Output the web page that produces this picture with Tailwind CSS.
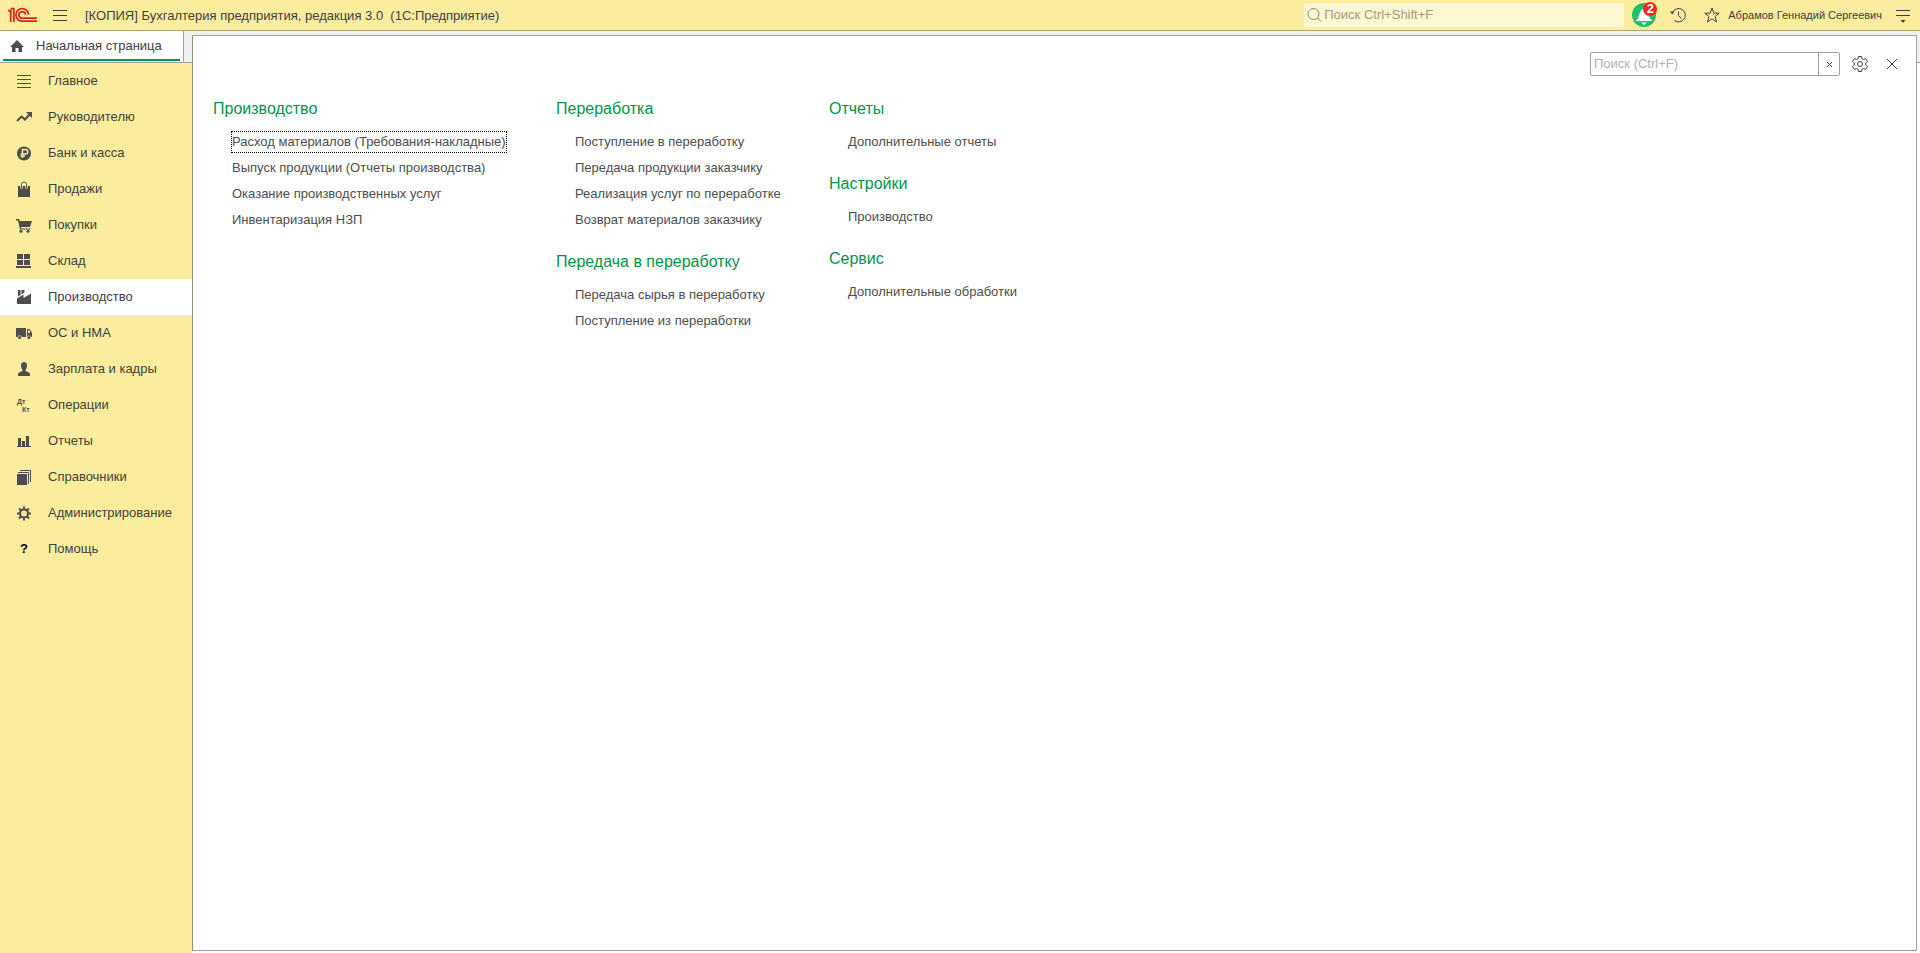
<!DOCTYPE html>
<html lang="ru">
<head>
    <meta charset="UTF-8">
    <meta name="viewport" content="width=device-width, initial-scale=1.0">
    <title>Бухгалтерия предприятия, редакция 3.0</title>
    <script src="https://cdn.jsdelivr.net/npm/@tailwindcss/browser@4"></script>
</head>
<body class="bg-white font-['Liberation_Sans',Arial,sans-serif] text-[13px] leading-5 text-[#404040]">
    <div class="flex flex-col min-h-screen">

        <!-- Top bar -->
        <header class="flex items-center h-[31px] bg-[#fbed9e] border-b border-[#a9a474]">
            <svg class="ml-2 w-[30px] h-4 shrink-0" viewBox="0 0 30 16" fill="none" stroke="#d9261c" stroke-width="1.8" aria-label="1С">
                <path d="M0 3.700H2.700V15M2.500 1.700H5.800V15"/>
                <path d="M20.500 7.500A6.300 6.300 0 1 0 14.500 14.200H29"/>
                <path d="M17.500 7.500A3.300 3.300 0 1 0 14.500 11.200H29"/>
            </svg>
            <button class="ml-[15px] w-[14px] h-4" aria-label="Меню">
                <svg class="w-[14px] h-4" viewBox="0 0 14 16" stroke="#404040"><path d="M0 3.500H14M0 8.500H14M0 13.500H14"/></svg>
            </button>
            <h1 class="ml-[18px] pt-[2px] flex-1 whitespace-pre">[КОПИЯ] Бухгалтерия предприятия, редакция 3.0  (1С:Предприятие)</h1>
            <label class="flex items-center w-80 h-6 pl-[3px] gap-px bg-[#fdf7d3] rounded-xs">
                <svg class="w-4 h-4 shrink-0" viewBox="0 0 16 16" fill="none" stroke="#8b8769"><circle cx="6.500" cy="7" r="5.500"/><path d="M10.500 11L14.500 15"/></svg>
                <input class="flex-1 min-w-0 outline-none placeholder:text-[#a09c80]" type="text" aria-label="Глобальный поиск" placeholder="Поиск Ctrl+Shift+F">
            </label>
            <button class="relative ml-2 w-6 h-6" aria-label="Уведомления">
                <svg class="w-6 h-6" viewBox="0 0 24 24"><circle cx="12" cy="12" r="12" fill="#1fbf6b"/><path d="M3.500 18C7 15.500 6.500 13 8 9.500C9 7 10 6 12 6C14 6 15 7 16 9.500C17.500 13 17 15.500 20.500 18Z" fill="#fff"/><path d="M9 19.500H15L12 22Z" fill="#fff"/></svg>
                <span class="absolute -top-px -right-px size-[14px] rounded-full bg-[#ff2020] text-white text-[13px] leading-[14px] font-bold">2</span>
            </button>
            <button class="ml-[14px] w-4 h-4" aria-label="История">
                <svg class="w-4 h-4" viewBox="0 0 16 16" fill="none" stroke="#404040"><path d="M2.500 5.500A6.700 6.700 0 1 1 4.500 13.500M8.500 4.500V8.500L11.500 11.500"/><path d="M0 4.500H4.500L2.300 7.500Z" fill="#404040" stroke="none"/></svg>
            </button>
            <button class="ml-[18px] w-4 h-4" aria-label="Избранное">
                <svg class="w-4 h-4" viewBox="0 0 16 16" fill="none" stroke="#404040"><path d="M8 1L9.900 6.200H15.200L11 9.500L12.500 15L8 11.800L3.500 15L5 9.500L0.800 6.200H6.100Z"/></svg>
            </button>
            <a class="ml-2 text-[11px]" href="#">Абрамов Геннадий Сергеевич</a>
            <button class="ml-[14px] mr-[10px] w-[14px] h-4" aria-label="Сервис и настройки">
                <svg class="w-[14px] h-4" viewBox="0 0 14 16"><path d="M0 3.500H14M0 8.500H14" stroke="#404040"/><path d="M4.500 13H9.500L7 16Z" fill="#404040"/></svg>
            </button>
        </header>

        <div class="flex flex-1 bg-[linear-gradient(#f0f0f0_31px,#a0a0a0_31px,#a0a0a0_32px,#fff_32px)]">
            <div class="flex flex-col w-48 shrink-0">
                <!-- Open windows -->
                <div class="h-8 border-b border-[#a0a0a0]">
                    <a class="flex items-center w-[184px] h-[31px] px-[3px] bg-white border-r border-[#a0a0a0]" href="#">
                        <span class="flex items-center flex-1 h-[29px] pl-[7px] gap-3 border-b-2 border-[#009646]">
                            <svg class="w-[14px] h-3" viewBox="0 0 14 12" fill="#4d4d4d"><path d="M7 0L14 7H12V12H8.500V8H5.500V12H2V7H0Z"/></svg>
                            Начальная страница
                        </span>
                    </a>
                </div>

                <!-- Sections -->
                <nav class="flex-1 bg-[#fbed9e]">
                    <a class="flex items-center h-9 pl-4 gap-4" href="#">
                        <svg class="w-4 h-4" viewBox="0 0 16 16" stroke="#4d4d4d"><path d="M1 2.500H15M1 6.500H15M1 10.500H15M1 14.500H15"/></svg>
                        Главное
                    </a>
                    <a class="flex items-center h-9 pl-4 gap-4" href="#">
                        <svg class="w-4 h-4" viewBox="0 0 16 16" fill="none"><path d="M1 12L5.500 7.500L9 10.500L14 5" stroke="#4d4d4d" stroke-width="2"/><path d="M10 3H16V9Z" fill="#4d4d4d"/></svg>
                        Руководителю
                    </a>
                    <a class="flex items-center h-9 pl-4 gap-4" href="#">
                        <svg class="w-4 h-4" viewBox="0 0 16 16" fill="none"><circle cx="8" cy="8.500" r="7" fill="#4d4d4d"/><path d="M6.500 13V4.500H9.500A2.200 2.200 0 0 1 9.500 9H4.500M4.500 11H9" stroke="#fbed9e" stroke-width="1.500"/></svg>
                        Банк и касса
                    </a>
                    <a class="flex items-center h-9 pl-4 gap-4" href="#">
                        <svg class="w-4 h-4" viewBox="0 0 16 16" fill="none"><path d="M2 5H14V16H2Z" fill="#4d4d4d"/><path d="M5.500 7.500V3.500A2.500 2.500 0 0 1 10.500 3.500V7.500" stroke="#fbed9e" stroke-width="2.500"/><path d="M5.500 7V3.500A2.500 2.500 0 0 1 10.500 3.500V7" stroke="#4d4d4d"/></svg>
                        Продажи
                    </a>
                    <a class="flex items-center h-9 pl-4 gap-4" href="#">
                        <svg class="w-4 h-4" viewBox="0 0 16 16" fill="#4d4d4d"><path d="M0 2H3.200L3.700 4H16L14 10H5L5.300 11.500H14V12.500H4L2 3.500H0Z"/><circle cx="5" cy="14.300" r="1.500"/><circle cx="12" cy="14.300" r="1.500"/></svg>
                        Покупки
                    </a>
                    <a class="flex items-center h-9 pl-4 gap-4" href="#">
                        <svg class="w-4 h-4" viewBox="0 0 16 16" fill="#4d4d4d"><path d="M1 1H7V6H1ZM8 1H14V6H8ZM1 7H7V12H1ZM8 7H14V12H8ZM0 13H15V15H0Z"/></svg>
                        Склад
                    </a>
                    <a class="flex items-center h-9 pl-4 gap-4 bg-white" href="#" aria-current="page">
                        <svg class="w-4 h-4" viewBox="0 0 16 16" fill="#4d4d4d"><path d="M1 15V9.500L7.500 5.500V9L15 4.500V15ZM2 1H4.500V6L2 7.500ZM5.500 1H8.500V3.500L5.500 5.500Z"/></svg>
                        Производство
                    </a>
                    <a class="flex items-center h-9 pl-4 gap-4" href="#">
                        <svg class="w-4 h-4" viewBox="0 0 16 16" fill="#4d4d4d"><path d="M0 3H10V12H6A2.500 2.500 0 0 0 1.500 12H0ZM11 4H13.500L16 7.500V12H15A2.300 2.300 0 0 0 11 11.500ZM12 5V8H14.500L13 5Z" fill-rule="evenodd"/><circle cx="3.700" cy="12.500" r="1.500"/><circle cx="12.800" cy="12.500" r="1.500"/></svg>
                        ОС и НМА
                    </a>
                    <a class="flex items-center h-9 pl-4 gap-4" href="#">
                        <svg class="w-4 h-4" viewBox="0 0 16 16" fill="#4d4d4d"><path d="M8 1C10 1 11 2.500 11 4.500C11 6.500 10 8.500 9.500 9V10L13 11.500C14 12 14 13 14 15H2C2 13 2 12 3 11.500L6.500 10V9C6 8.500 5 6.500 5 4.500C5 2.500 6 1 8 1Z"/></svg>
                        Зарплата и кадры
                    </a>
                    <a class="flex items-center h-9 pl-4 gap-4" href="#">
                        <svg class="w-4 h-4 overflow-visible" viewBox="0 0 16 16" fill="#4d4d4d" font-size="7" font-weight="bold"><text x="1" y="7">Дт</text><text x="6" y="15">Кт</text></svg>
                        Операции
                    </a>
                    <a class="flex items-center h-9 pl-4 gap-4" href="#">
                        <svg class="w-4 h-4" viewBox="0 0 16 16" fill="#4d4d4d"><path d="M2 5H5V13H2ZM6 8H9V13H6ZM10 3H13V13H10ZM1 13H15V14H1Z"/></svg>
                        Отчеты
                    </a>
                    <a class="flex items-center h-9 pl-4 gap-4" href="#">
                        <svg class="w-4 h-4" viewBox="0 0 16 16" fill="none"><path d="M1 5H11V16H1Z" fill="#4d4d4d"/><path d="M2 3.500H12.500V15M4 1.500H14.500V13" stroke="#4d4d4d"/></svg>
                        Справочники
                    </a>
                    <a class="flex items-center h-9 pl-4 gap-4" href="#">
                        <svg class="w-4 h-4" viewBox="0 0 16 16" fill="none" stroke="#4d4d4d" stroke-width="2"><circle cx="8" cy="8.500" r="4"/><path d="M8 1.500V4M8 13V15.500M1 8.500H3.500M12.500 8.500H15M3 3.500L5 5.500M11 11.500L13 13.500M13 3.500L11 5.500M5 11.500L3 13.500"/></svg>
                        Администрирование
                    </a>
                    <a class="flex items-center h-9 pl-4 gap-4" href="#">
                        <span class="w-4 text-center font-bold text-black" aria-hidden="true">?</span>
                        Помощь
                    </a>
                </nav>
            </div>

            <!-- Section panel -->
            <main class="flex-1 mt-1 mr-[3px] mb-[2px] bg-white border border-[#a0a0a0] border-l-[#949069]">
                <div class="flex items-center justify-end h-6 mt-4 pr-[19px]">
                    <div class="flex w-[250px] h-6 border border-[#a0a0a0] rounded-xs">
                        <input class="flex-1 min-w-0 pl-[3px] outline-none placeholder:text-[#b0b0b0]" type="text" aria-label="Поиск" placeholder="Поиск (Ctrl+F)">
                        <button class="w-[21px] border-l border-[#a0a0a0] flex items-center justify-center" aria-label="Очистить">
                            <svg class="w-[5px] h-[5px]" viewBox="0 0 5 5" stroke="#404040"><path d="M0 0L5 5M5 0L0 5"/></svg>
                        </button>
                    </div>
                    <button class="ml-3 w-4 h-4" aria-label="Настройки">
                        <svg class="w-4 h-4" viewBox="0 0 16 16" fill="none" stroke="#404040"><path d="M6.500 0.500H9.500L10 2.700L11.500 3.500L13.500 2.500L15.500 5.500L13.800 7V9L15.500 10.500L13.500 13.500L11.500 12.500L10 13.300L9.500 15.500H6.500L6 13.300L4.500 12.500L2.500 13.500L0.500 10.500L2.200 9V7L0.500 5.500L2.500 2.500L4.500 3.500L6 2.700Z"/><circle cx="8" cy="8" r="2.500"/></svg>
                    </button>
                    <button class="ml-[19px] w-[10px] h-[10px]" aria-label="Закрыть">
                        <svg class="w-[10px] h-[10px]" viewBox="0 0 10 10" stroke="#404040"><path d="M0 0L10 10M10 0L0 10"/></svg>
                    </button>
                </div>

                <div class="grid grid-cols-[343px_273px_auto] mt-[23px] pl-5 text-[#4d4d4d]">
                    <div class="flex flex-col gap-[19px]">
                        <section>
                            <h2 class="mb-[10px] text-base leading-5 text-[#009646]">Производство</h2>
                            <ul class="pl-[19px] leading-[26px]">
                                <li class="h-[26px] flex items-center"><a class="leading-5 outline-1 outline-dotted outline-black" href="#">Расход материалов (Требования-накладные)</a></li>
                                <li><a href="#">Выпуск продукции (Отчеты производства)</a></li>
                                <li><a href="#">Оказание производственных услуг</a></li>
                                <li><a href="#">Инвентаризация НЗП</a></li>
                            </ul>
                        </section>
                    </div>
                    <div class="flex flex-col gap-[19px]">
                        <section>
                            <h2 class="mb-[10px] text-base leading-5 text-[#009646]">Переработка</h2>
                            <ul class="pl-[19px] leading-[26px]">
                                <li><a href="#">Поступление в переработку</a></li>
                                <li><a href="#">Передача продукции заказчику</a></li>
                                <li><a href="#">Реализация услуг по переработке</a></li>
                                <li><a href="#">Возврат материалов заказчику</a></li>
                            </ul>
                        </section>
                        <section>
                            <h2 class="mb-[10px] text-base leading-5 text-[#009646]">Передача в переработку</h2>
                            <ul class="pl-[19px] leading-[26px]">
                                <li><a href="#">Передача сырья в переработку</a></li>
                                <li><a href="#">Поступление из переработки</a></li>
                            </ul>
                        </section>
                    </div>
                    <div class="flex flex-col gap-[19px]">
                        <section>
                            <h2 class="mb-[10px] text-base leading-5 text-[#009646]">Отчеты</h2>
                            <ul class="pl-[19px] leading-[26px]">
                                <li><a href="#">Дополнительные отчеты</a></li>
                            </ul>
                        </section>
                        <section>
                            <h2 class="mb-[10px] text-base leading-5 text-[#009646]">Настройки</h2>
                            <ul class="pl-[19px] leading-[26px]">
                                <li><a href="#">Производство</a></li>
                            </ul>
                        </section>
                        <section>
                            <h2 class="mb-[10px] text-base leading-5 text-[#009646]">Сервис</h2>
                            <ul class="pl-[19px] leading-[26px]">
                                <li><a href="#">Дополнительные обработки</a></li>
                            </ul>
                        </section>
                    </div>
                </div>
            </main>
        </div>
    </div>
</body>
</html>
